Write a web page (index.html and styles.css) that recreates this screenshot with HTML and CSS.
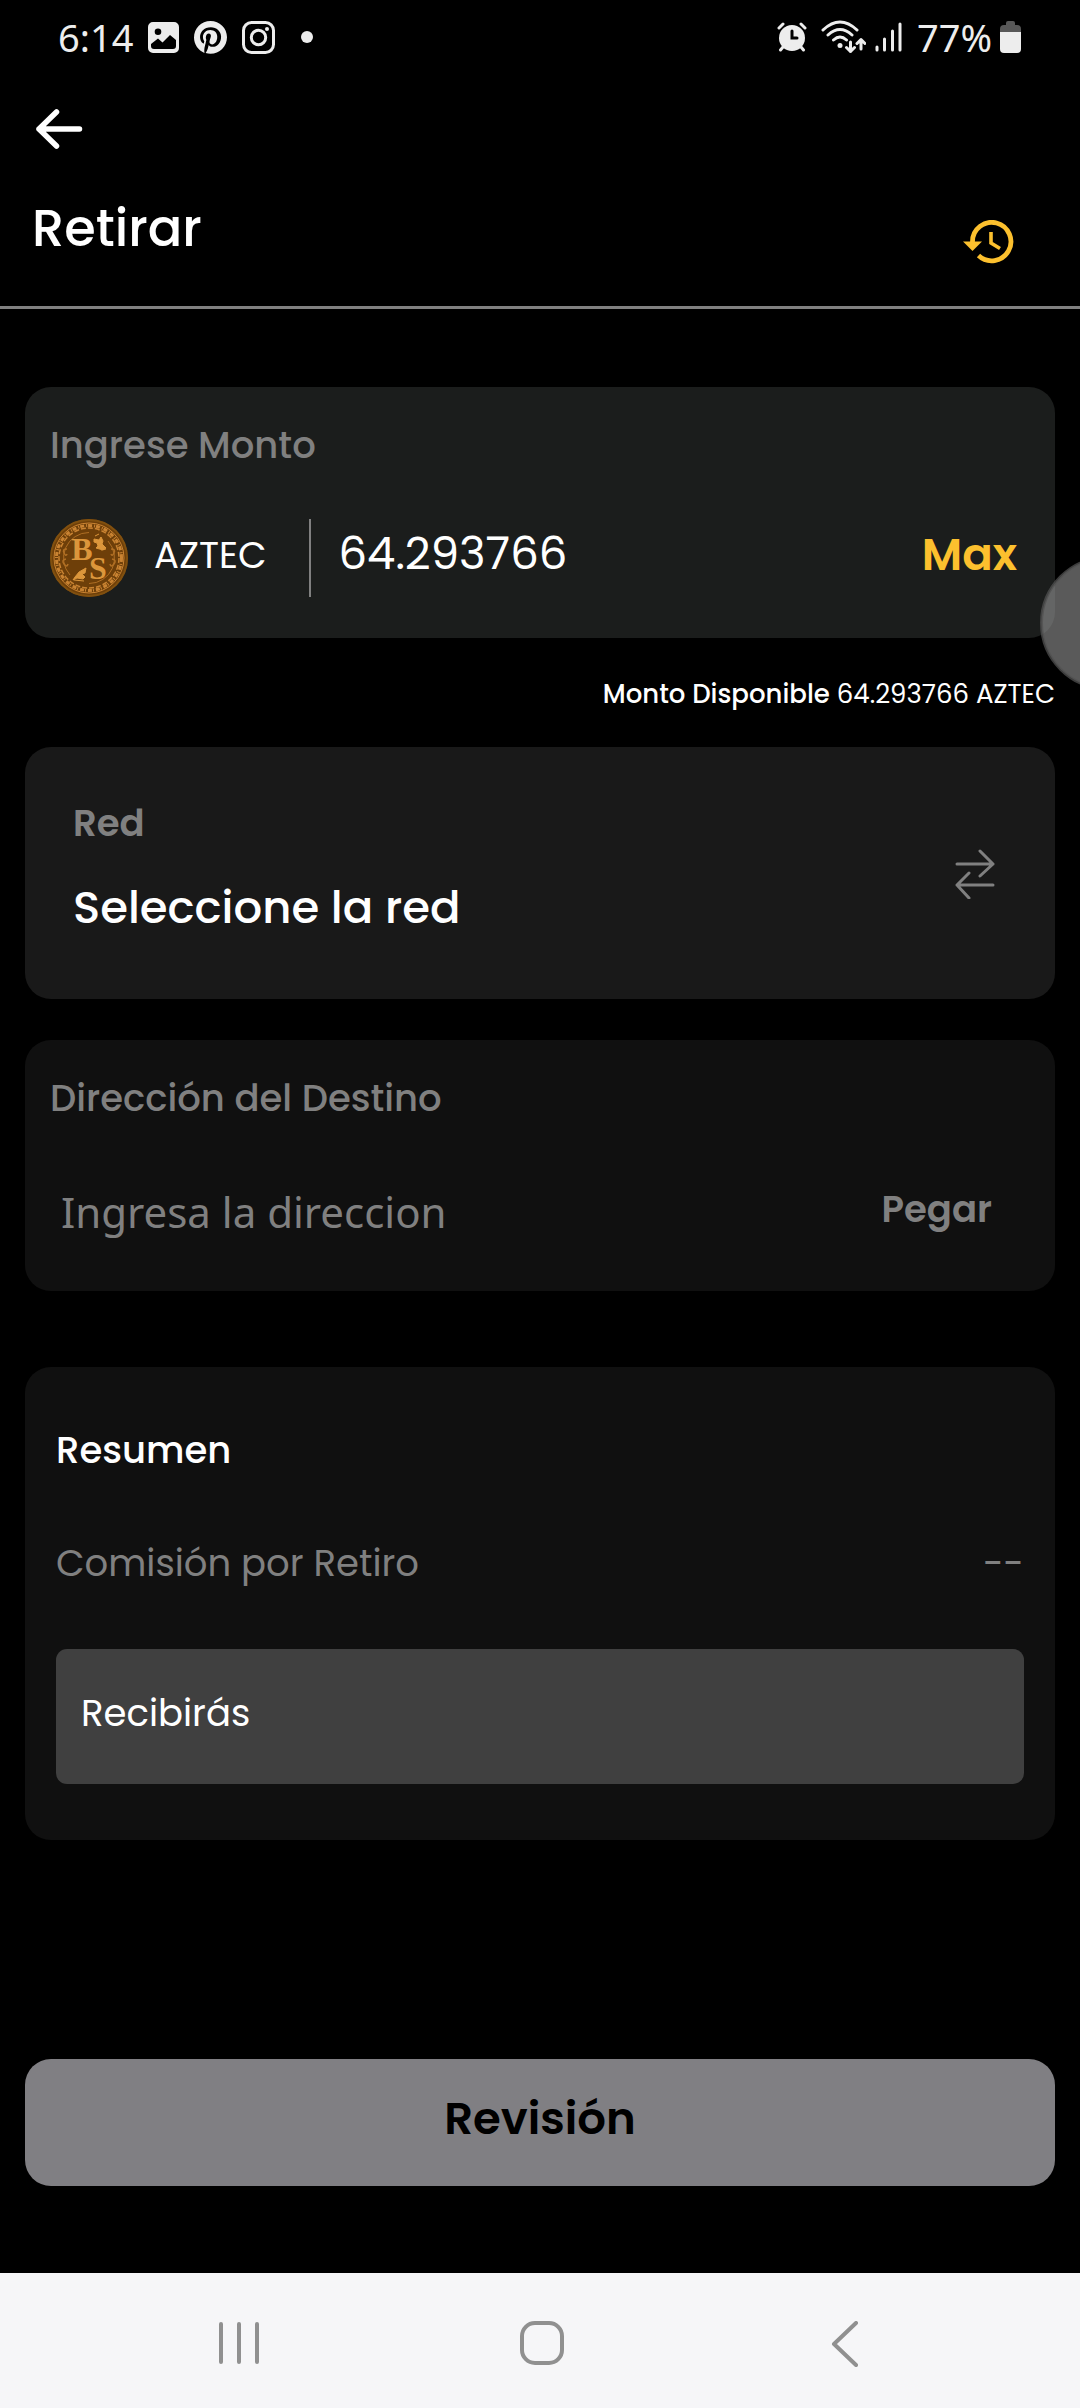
FILE: index.html
```html
<!DOCTYPE html>
<html lang="es">
<head>
<meta charset="utf-8">
<meta name="viewport" content="width=device-width, initial-scale=1">
<title>Retirar</title>
<link rel="stylesheet" href="styles.css">
</head>
<body>
<div class="status">
  <div class="status-group">
    <span class="clock">6:14</span>
    <svg class="status-photo" width="31" height="31" viewBox="0 0 31 31" aria-hidden="true"><path fill="currentColor" fill-rule="evenodd" d="M5 0h21a5 5 0 0 1 5 5v21a5 5 0 0 1-5 5H5a5 5 0 0 1-5-5V5a5 5 0 0 1 5-5zM10 6.500a3.300 3.300 0 1 0 0 6.600a3.300 3.300 0 1 0 0-6.600zM3 22v2a3 3 0 0 0 3 3h19a3 3 0 0 0 3-3v-6l-6-5-7.500 7.500-4.500-4z"/></svg>
    <svg class="status-pin" width="33" height="33" viewBox="0 0 24 24" aria-hidden="true"><path fill="currentColor" d="M12 0C5.400 0 0 5.400 0 12c0 5.100 3.200 9.400 7.600 11.200-.1-.9-.2-2.400 0-3.400.2-.9 1.400-6 1.400-6s-.4-.7-.4-1.800c0-1.700 1-2.900 2.200-2.900 1 0 1.500.8 1.500 1.700 0 1-.7 2.600-1 4-.3 1.200.6 2.200 1.800 2.200 2.100 0 3.800-2.200 3.800-5.500 0-2.900-2.100-4.900-5-4.900-3.400 0-5.400 2.600-5.400 5.200 0 1 .4 2.100.9 2.700.1.100.1.200.1.300-.1.400-.3 1.200-.3 1.400-.1.200-.2.300-.4.200-1.500-.7-2.400-2.900-2.400-4.600 0-3.800 2.800-7.300 7.900-7.300 4.100 0 7.400 3 7.400 6.900 0 4.100-2.600 7.400-6.200 7.400-1.200 0-2.400-.6-2.800-1.400l-.7 2.800c-.3 1-1 2.300-1.500 3.100 1.100.4 2.300.5 3.500.5 6.600 0 12-5.400 12-12S18.600 0 12 0z"/></svg>
    <svg class="status-camera" width="33" height="33" viewBox="0 0 33 33" fill="none" stroke="currentColor" stroke-width="3" aria-hidden="true"><rect x="1.500" y="1.500" width="30" height="30" rx="8"/><circle cx="16.500" cy="16.500" r="7.200"/><circle cx="25" cy="8" r="2" fill="currentColor" stroke="none"/></svg>
    <svg width="12" height="12" viewBox="0 0 12 12" aria-hidden="true"><circle cx="6" cy="6" r="6" fill="currentColor"/></svg>
  </div>
  <div class="status-group">
    <svg class="status-alarm" width="30" height="30" viewBox="0 0 30 30" aria-hidden="true"><g fill="none" stroke="currentColor" stroke-width="3" stroke-linecap="round"><path d="M2 6l4-4M28 6l-4-4M6 25l-2.500 3M24 25l2.500 3"/></g><circle cx="15" cy="16" r="13" fill="currentColor"/><path d="M15 9v7h5" fill="none" stroke="#000" stroke-width="3" stroke-linecap="round"/></svg>
    <svg class="status-wifi" width="45" height="34" viewBox="0 0 45 34" fill="none" stroke="currentColor" stroke-width="3" stroke-linecap="round" stroke-linejoin="round" aria-hidden="true"><path d="M2 10q17-16 34 0M7 15q12-11 24 0M12.500 20q6.500-6 13 0"/><circle cx="19" cy="25.500" r="2.500" fill="currentColor" stroke="none"/><path d="M29.500 22v9.500m-4-4 4 4 4-4M40 29v-9.500m-4 4 4-4 4 4"/></svg>
    <svg class="status-signal" width="28" height="30" viewBox="0 0 28 30" stroke="currentColor" stroke-width="3" stroke-linecap="round" aria-hidden="true"><path d="M3 25v3M10.500 17v11M18.500 9v19M26 2v26"/></svg>
    <span>77%</span>
    <svg class="status-battery" width="21" height="32" viewBox="0 0 21 32" aria-hidden="true"><path fill="#585858" d="M0 12V8a4 4 0 0 1 4-4h2V2a2 2 0 0 1 2-2h5a2 2 0 0 1 2 2v2h2a4 4 0 0 1 4 4v4z"/><path fill="currentColor" d="M0 11h21v17a4 4 0 0 1-4 4H4a4 4 0 0 1-4-4z"/></svg>
  </div>
</div>

<header class="header">
  <button class="icon-button back" type="button" aria-label="Volver">
    <svg width="48" height="42" viewBox="0 0 48 42" fill="none" stroke="#fff" stroke-width="5.500" stroke-linecap="round" stroke-linejoin="round" aria-hidden="true"><path d="M44.500 21H4M21.500 4L4 21l17.500 17"/></svg>
  </button>
  <div class="title-row">
    <h1 class="title">Retirar</h1>
    <button class="icon-button history" type="button" aria-label="Historial">
      <svg width="51" height="44" viewBox="0 0 51 44" aria-hidden="true"><path d="M9.500 23V21.500A19.200 19.200 0 1 1 15.500 35.500" fill="none" stroke="#fcc02e" stroke-width="4.800"/><path d="M0 21.500h19L9.500 31z" fill="#fcc02e"/><path d="M28 12v11l9 5.500" fill="none" stroke="#fcc02e" stroke-width="3.600"/></svg>
    </button>
  </div>
</header>

<main class="content">
  <section class="card amount">
    <label class="label" for="amount">Ingrese Monto</label>
    <div class="amount-row">
      <svg class="coin" width="78" height="78" viewBox="0 0 78 78" aria-hidden="true">
        <circle cx="39" cy="39" r="39" fill="#6e3f09"/>
        <circle cx="39" cy="39" r="38" fill="none" stroke="#81500f" stroke-width="2"/>
        <circle cx="39" cy="39" r="35" fill="none" stroke="#c98332" stroke-width="1"/>
        <circle cx="39" cy="39" r="32.500" fill="none" stroke="#c98332" stroke-width="3" stroke-dasharray="4 2 1 1"/>
        <circle cx="39" cy="39" r="30" fill="none" stroke="#c98332" stroke-width="1.500" stroke-dasharray="5 2"/>
        <path d="M39 13.500A25.500 25.500 0 0 0 20 56M39 64.500A25.500 25.500 0 0 0 58 22" fill="none" stroke="#b06f24" stroke-width="1"/>
        <path d="M17 30q-5 0-3 4t3 1M16 40q-5 1-2 5t4 0M61 30q5 0 3 4t-3 1M62 40q5 1 2 5t-4 0" fill="none" stroke="#b06f24" stroke-width="1.500"/>
        <path d="M44 20l5 1 2-3 2 4-1 3 4 4-3 2-7-2 2-2-1-3-3-1zM25 58l4-5 7-4-1 5-3 1 3 3-2 2-6-1-4 2zM45 17l4-2M51 31l5-1M24 61l10 1" fill="#dc963b" stroke="#dc963b" stroke-width="1"/>
        <text class="coin-letter" x="32" y="41" text-anchor="middle">B</text>
        <text class="coin-letter" x="48" y="60" text-anchor="middle">S</text>
      </svg>
      <span class="currency">AZTEC</span>
      <input class="amount-input" id="amount" type="text" inputmode="decimal" value="64.293766">
      <button class="max" type="button">Max</button>
    </div>
  </section>

  <p class="available"><strong>Monto Disponible</strong> 64.293766 AZTEC</p>

  <button class="card network" type="button">
    <span class="network-text">
      <span class="network-label">Red</span>
      <span class="network-value">Seleccione la red</span>
    </span>
    <svg class="network-icon" width="44" height="50" viewBox="0 0 44 50" fill="none" stroke="#808080" stroke-width="3" stroke-linecap="round" stroke-linejoin="round" aria-hidden="true"><path d="M4 15h36M27 2l13 13-13 12M40 36H4M16 24L4 36l12 13"/></svg>
  </button>

  <section class="card address">
    <label class="label" for="address">Dirección del Destino</label>
    <div class="address-row">
      <input class="address-input" id="address" type="text" placeholder="Ingresa la direccion">
      <button class="paste" type="button">Pegar</button>
    </div>
  </section>

  <section class="card summary">
    <h2 class="summary-title">Resumen</h2>
    <div class="fee"><span>Comisión por Retiro</span><span>--</span></div>
    <div class="receive">Recibirás</div>
  </section>

  <button class="submit" type="button">Revisión</button>
</main>

<nav class="navbar" aria-label="Sistema">
  <button class="icon-button" type="button" aria-label="Recientes"><svg width="44" height="44" viewBox="0 0 44 44" stroke="#909090" stroke-width="4" stroke-linecap="round" aria-hidden="true"><path d="M4 3v38M22 3v38M40 3v38"/></svg></button>
  <button class="icon-button" type="button" aria-label="Inicio"><svg width="44" height="44" viewBox="0 0 44 44" fill="none" stroke="#909090" stroke-width="4" aria-hidden="true"><rect x="2" y="2" width="40" height="40" rx="13"/></svg></button>
  <button class="icon-button" type="button" aria-label="Atrás"><svg width="44" height="46" viewBox="0 0 44 46" fill="none" stroke="#909090" stroke-width="4" stroke-linecap="round" stroke-linejoin="round" aria-hidden="true"><path d="M33 2L11 23l22 21"/></svg></button>
</nav>
<svg class="assistive" width="40" height="134" viewBox="0 0 40 134" aria-hidden="true"><circle cx="67" cy="67" r="65.500" fill="#969696" fill-opacity=".6" stroke="#505050" stroke-opacity=".75" stroke-width="3"/></svg>
</body>
</html>
```
FILE: styles.css
```css
* {
  box-sizing: border-box;
}

body {
  margin: 0;
  min-height: 100vh;
  display: flex;
  flex-direction: column;
  position: relative;
  background: #000;
  color: #fff;
  font-family: Poppins, Inter, sans-serif;
  font-size: 37px;
  line-height: 48px;
}

button,
input {
  margin: 0;
  padding: 0;
  border: 0;
  background: none;
  color: inherit;
  font: inherit;
}

svg {
  display: block;
  flex: none;
}

h1,
h2,
p {
  margin: 0;
}

.status {
  display: flex;
  justify-content: space-between;
  align-items: center;
  height: 74px;
  padding: 0 59px 0 58px;
  color: #ededed;
  font-family: "Noto Sans", sans-serif;
  font-size: 38px;
}

.status-group {
  display: flex;
  align-items: center;
}

.status-photo {
  margin-left: 15px;
}

.status-pin,
.status-camera {
  margin-left: 15px;
}

.status-camera {
  margin-right: 26px;
}

.status-wifi {
  margin: 0 8px 0 14px;
}

.status-signal {
  margin-right: 15px;
}

.status-battery {
  margin-left: 8px;
}

.icon-button {
  display: flex;
}

.header {
  padding: 34px 66px 28px 32px;
  border-bottom: 3px solid #808080;
}

.back {
  margin-left: 3px;
}

.title-row {
  display: flex;
  justify-content: space-between;
  align-items: flex-end;
  margin-top: 48px;
}

.title {
  padding-bottom: 20px;
  font-size: 51px;
  line-height: 60px;
  font-weight: 500;
}

.history {
  padding-bottom: 14px;
}

.content {
  flex: 1;
  display: flex;
  flex-direction: column;
  padding: 78px 25px 87px;
}

.card {
  border-radius: 26px;
  background: #101010;
}

.label {
  display: block;
  color: #808080;
  font-weight: 500;
}

.amount {
  padding: 34px 38px 41px 25px;
  background: #1b1d1c;
}

.amount-row {
  display: flex;
  align-items: center;
  margin-top: 50px;
}

.coin-letter {
  fill: #dc963b;
  font: bold 32px "Liberation Serif", serif;
}

.currency {
  margin: 0 42px 0 26px;
  padding-bottom: 6px;
}

.amount-input {
  flex: 1;
  min-width: 0;
  height: 78px;
  padding: 0 0 8px 28px;
  border-left: 2px solid #808080;
  font-size: 45px;
}

.max {
  padding-bottom: 6px;
  color: #fcc02e;
  font-size: 45px;
  font-weight: 600;
}

.available {
  margin: 32px 0 29px;
  font-size: 26px;
  text-align: right;
}

.available strong {
  font-weight: 500;
}

.network {
  display: flex;
  justify-content: space-between;
  align-items: center;
  padding: 52px 58px 63px 48px;
  background: #191919;
  text-align: left;
}

.network-text {
  display: flex;
  flex-direction: column;
  gap: 33px;
}

.network-icon {
  margin-top: 12px;
}

.network-label {
  color: #808080;
  font-weight: 600;
}

.network-value {
  font-size: 45px;
  line-height: 56px;
  font-weight: 500;
}

.address {
  margin-top: 41px;
  padding: 34px 63px 48px 25px;
}

.address-row {
  display: flex;
  align-items: center;
  margin-top: 57px;
}

.address-input {
  flex: 1;
  min-width: 0;
  height: 64px;
  padding-left: 11px;
  font-family: "Noto Sans", sans-serif;
  font-size: 42px;
}

.address-input::placeholder {
  color: #808080;
  opacity: 1;
}

.paste {
  padding-bottom: 5px;
  color: #808080;
  font-weight: 600;
}

.summary {
  margin-top: 76px;
  padding: 59px 31px 56px;
}

.summary-title {
  font-size: 37px;
  font-weight: 500;
}

.fee {
  display: flex;
  justify-content: space-between;
  margin: 65px 0 62px;
  color: #808080;
}

.receive {
  padding: 40px 25px 47px;
  border-radius: 11px;
  background: #404040;
}

.submit {
  margin-top: auto;
  height: 127px;
  padding-bottom: 8px;
  border-radius: 26px;
  background: #807f83;
  color: #000;
  font-size: 45px;
  font-weight: 600;
}

.navbar {
  display: flex;
  justify-content: space-between;
  padding: 48px 213px 41px 217px;
  background: #f6f6f8;
}

.assistive {
  position: absolute;
  top: 556px;
  right: 0;
}
```
